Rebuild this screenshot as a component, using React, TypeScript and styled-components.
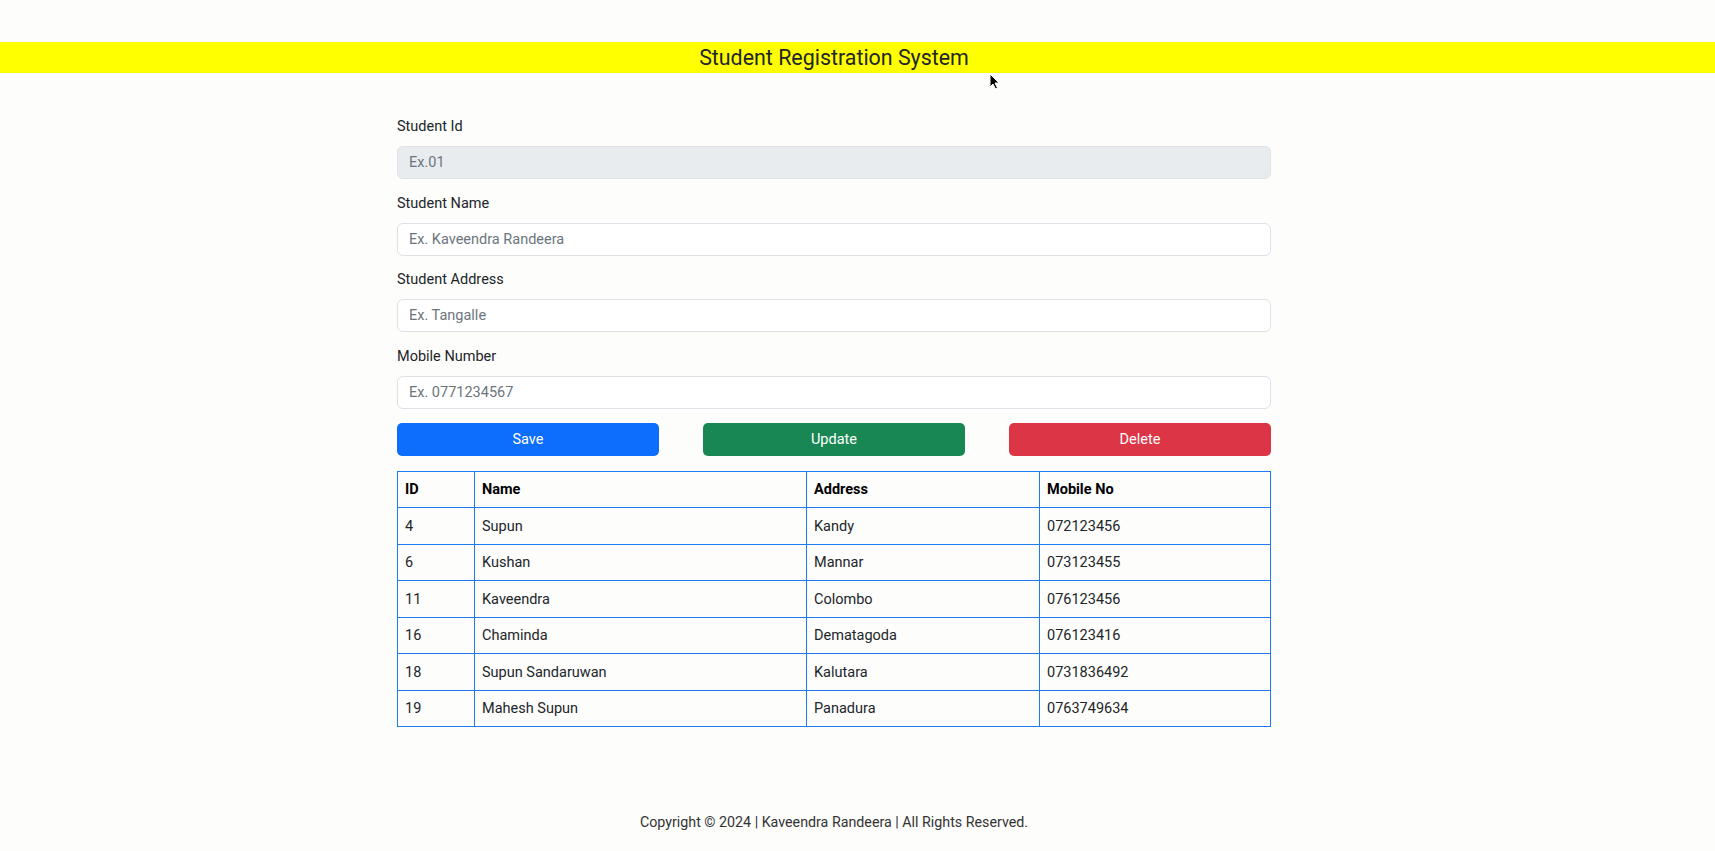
import React from "react";
import styled, { createGlobalStyle } from "styled-components";

const Global = createGlobalStyle`
  html, body { margin: 0; padding: 0; background: #fdfdfc; }
  body { font-family: Roboto, "Liberation Sans", Arial, sans-serif; color: #212529; }
  * { box-sizing: border-box; }
`;

const Page = styled.div`
  position: relative;
  width: 1715px;
  min-height: 851px;
  padding-top: 42px;
`;

const TitleBar = styled.header`
  height: 31px;
  background: #ffff00;
  display: flex;
  align-items: center;
  justify-content: center;
  padding-right: 47px;
`;

const Title = styled.h1`
  margin: 0;
  font-size: 21.4px;
  font-weight: 400;
  color: #212529;
  line-height: 31px;
`;

const Main = styled.main`
  padding-right: 47px;
`;

const Container = styled.div`
  width: 874px;
  margin: 0 auto;
  padding-top: 44px;
`;

const Group = styled.div`
  display: flex;
  flex-direction: column;
  margin-bottom: 14.6px;
`;

const Label = styled.label`
  font-size: 14.5px;
  line-height: 20px;
  margin-bottom: 9px;
  color: #212529;
`;

const Input = styled.input<{ $disabled?: boolean }>`
  height: 33px;
  width: 100%;
  padding: 0 11px;
  font-family: inherit;
  font-size: 14.5px;
  color: #212529;
  background: ${(p) => (p.$disabled ? "#e9ecef" : "#ffffff")};
  border: 1px solid #dee2e6;
  border-radius: 6px;
  outline: none;
  &::placeholder { color: #6c757d; }
`;

const ButtonRow = styled.div`
  display: grid;
  grid-template-columns: repeat(3, 262px);
  justify-content: space-between;
  margin-bottom: 14.5px;
`;

const Button = styled.button<{ $color: string }>`
  height: 33px;
  border: none;
  border-radius: 5px;
  background: ${(p) => p.$color};
  color: #fff;
  font-family: inherit;
  font-size: 14.5px;
  cursor: pointer;
`;

const Table = styled.table`
  width: 873px;
  border-collapse: collapse;
  table-layout: fixed;
  font-size: 14.5px;
`;

const Th = styled.th<{ $w: number }>`
  width: ${(p) => p.$w}px;
  height: 36.5px;
  padding: 0 7px;
  text-align: left;
  font-weight: 700;
  color: #000;
  border: 1px solid #1f7bf2;
`;

const Td = styled.td`
  height: 36.5px;
  padding: 0 7px;
  color: #212529;
  border: 1px solid #1f7bf2;
`;

const Footer = styled.footer`
  padding-right: 47px;
  margin-top: 85px;
  text-align: center;
  font-size: 14.25px;
  line-height: 20px;
  color: #333;
`;

const Cursor = styled.svg`
  position: absolute;
  left: 989px;
  top: 73px;
`;

const rows = [
  ["4", "Supun", "Kandy", "072123456"],
  ["6", "Kushan", "Mannar", "073123455"],
  ["11", "Kaveendra", "Colombo", "076123456"],
  ["16", "Chaminda", "Dematagoda", "076123416"],
  ["18", "Supun Sandaruwan", "Kalutara", "0731836492"],
  ["19", "Mahesh Supun", "Panadura", "0763749634"],
];

export default function App() {
  return (
    <>
      <Global />
      <Page>
        <TitleBar>
          <Title>Student Registration System</Title>
        </TitleBar>
        <Main>
          <Container>
            <Group>
              <Label>Student Id</Label>
              <Input $disabled disabled placeholder="Ex.01" />
            </Group>
            <Group>
              <Label>Student Name</Label>
              <Input placeholder="Ex. Kaveendra Randeera" />
            </Group>
            <Group>
              <Label>Student Address</Label>
              <Input placeholder="Ex. Tangalle" />
            </Group>
            <Group>
              <Label>Mobile Number</Label>
              <Input placeholder="Ex. 0771234567" />
            </Group>
            <ButtonRow>
              <Button $color="#0d6efd">Save</Button>
              <Button $color="#198754">Update</Button>
              <Button $color="#dc3545">Delete</Button>
            </ButtonRow>
            <Table>
              <thead>
                <tr>
                  <Th $w={77}>ID</Th>
                  <Th $w={332}>Name</Th>
                  <Th $w={233}>Address</Th>
                  <Th $w={231}>Mobile No</Th>
                </tr>
              </thead>
              <tbody>
                {rows.map((r) => (
                  <tr key={r[0]}>
                    {r.map((c, i) => (
                      <Td key={i}>{c}</Td>
                    ))}
                  </tr>
                ))}
              </tbody>
            </Table>
          </Container>
        </Main>
        <Footer>Copyright © 2024 | Kaveendra Randeera | All Rights Reserved.</Footer>
        <Cursor width="12" height="17" viewBox="0 0 12 17">
          <path d="M1 1 L1 14 L4 11 L6.5 16 L8.5 15 L6 10 L10 10 Z" fill="#000" stroke="#fff" strokeWidth="1" />
        </Cursor>
      </Page>
    </>
  );
}
